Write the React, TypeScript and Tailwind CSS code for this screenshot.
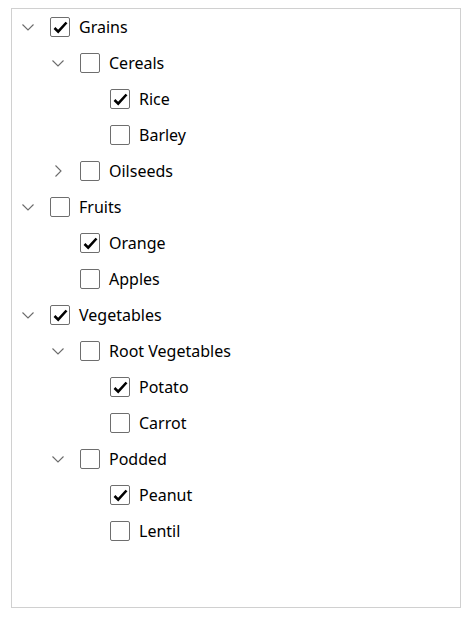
import React from "react";

type Node = { label: string; checked?: boolean; expanded?: boolean; children?: Node[] };

const data: Node[] = [
  {
    label: "Grains", checked: true, expanded: true, children: [
      { label: "Cereals", expanded: true, children: [
        { label: "Rice", checked: true },
        { label: "Barley" },
      ] },
      { label: "Oilseeds", expanded: false, children: [{ label: "x" }] },
    ],
  },
  {
    label: "Fruits", expanded: true, children: [
      { label: "Orange", checked: true },
      { label: "Apples" },
    ],
  },
  {
    label: "Vegetables", checked: true, expanded: true, children: [
      { label: "Root Vegetables", expanded: true, children: [
        { label: "Potato", checked: true },
        { label: "Carrot" },
      ] },
      { label: "Podded", expanded: true, children: [
        { label: "Peanut", checked: true },
        { label: "Lentil" },
      ] },
    ],
  },
];

function Chevron({ down }: { down: boolean }) {
  return (
    <svg width="12" height="12" viewBox="0 0 12 12" className="shrink-0 ml-[2px]">
      {down ? (
        <path d="M0.5 3.5 L6 9 L11.5 3.5" fill="none" stroke="#6b6b6b" strokeWidth="1.1" />
      ) : (
        <path d="M3.5 0.5 L9 6 L3.5 11.5" fill="none" stroke="#6b6b6b" strokeWidth="1.1" />
      )}
    </svg>
  );
}

function Box({ checked }: { checked?: boolean }) {
  return (
    <div className="w-[20px] h-[20px] border border-[#6e6e6e] rounded-[2px] bg-white flex items-center justify-center shrink-0">
      {checked && (
        <svg width="15" height="13" viewBox="0 0 15 13">
          <path d="M1.5 7 L5.2 10.7 L13.5 1.5" fill="none" stroke="#000" strokeWidth="2.6" />
        </svg>
      )}
    </div>
  );
}

function Rows({ nodes, level }: { nodes: Node[]; level: number }) {
  return (
    <>
      {nodes.map((n, i) => (
        <React.Fragment key={n.label + i}>
          <div className="h-[36px] flex items-center" style={{ paddingLeft: 8 + level * 30 }}>
            <div className="w-[30px] flex items-center">
              {n.children ? <Chevron down={!!n.expanded} /> : null}
            </div>
            <Box checked={n.checked} />
            <span className="ml-[9px] text-[16px] text-black leading-none">{n.label}</span>
          </div>
          {n.children && n.expanded && <Rows nodes={n.children} level={level + 1} />}
        </React.Fragment>
      ))}
    </>
  );
}

export default function App() {
  return (
    <div className="w-[468px] h-[617px] bg-white pt-[8px] pl-[11px]" style={{ fontFamily: '"Noto Sans", "Open Sans", sans-serif' }}>
      <div className="w-[450px] h-[600px] border border-[#d0d0d0] bg-white">
        <Rows nodes={data} level={0} />
      </div>
    </div>
  );
}
